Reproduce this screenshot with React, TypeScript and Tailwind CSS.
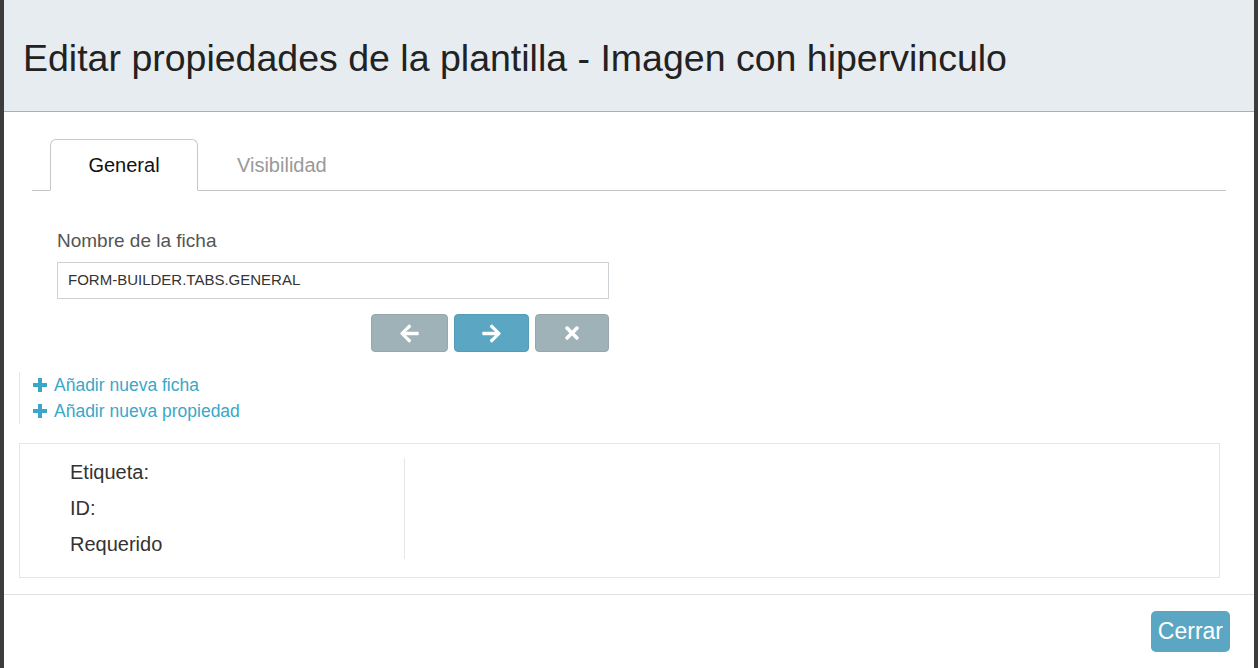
import { FaArrowLeft, FaArrowRight, FaTimes } from "react-icons/fa";

const font = { fontFamily: '"Liberation Sans", Arial, sans-serif' };

function Plus() {
  return (
    <svg width="14" height="14" viewBox="0 0 14 14" className="shrink-0">
      <path d="M5 0h4v5h5v4H9v5H5V9H0V5h5z" fill="currentColor" />
    </svg>
  );
}

export default function App() {
  return (
    <div className="h-[668px] w-[1258px] bg-[#3c3c3c] px-[4px] overflow-hidden" style={font}>
      <div className="h-full bg-white flex flex-col">
        {/* header */}
        <div className="h-[112px] shrink-0 bg-[#e7ecf0] border-b border-[#a9aeb8] flex items-center pl-[19px] pt-[6px]">
          <h1 className="text-[37.5px] text-[#222]">Editar propiedades de la plantilla - Imagen con hipervinculo</h1>
        </div>

        {/* body */}
        <div className="flex-1">
          <div className="mx-[28px] mt-[27px] border-b border-[#c4c4c4] flex pl-[18px] h-[52px]">
            <div className="w-[148px] h-[52px] -mb-px bg-white border border-[#c8c8c8] border-b-white rounded-t-[6px] flex items-center justify-center text-[20px] text-[#111]">
              General
            </div>
            <div className="px-[39px] flex items-center text-[20px] text-[#999]">Visibilidad</div>
          </div>

          <div className="ml-[53px] w-[552px] mt-[38px]">
            <div className="text-[19px] text-[#555] leading-[24px]">Nombre de la ficha</div>
            <div className="mt-[9px] h-[37px] border border-[#ccd1d6] flex items-center px-[10px] text-[15px] text-[#333]">
              FORM-BUILDER.TABS.GENERAL
            </div>
            <div className="mt-[15px] flex justify-end gap-[6px]">
              <button className="w-[77px] h-[38px] rounded-[4px] bg-[#9eb2b8] border border-[#99a6ab] flex items-center justify-center text-white">
                <FaArrowLeft size={21} />
              </button>
              <button className="w-[75px] h-[38px] rounded-[4px] bg-[#5aa6c3] border border-[#559cb6] flex items-center justify-center text-white">
                <FaArrowRight size={21} />
              </button>
              <button className="w-[74px] h-[38px] rounded-[4px] bg-[#9eb2b8] border border-[#99a6ab] flex items-center justify-center text-white">
                <FaTimes size={20} />
              </button>
            </div>
          </div>

          <div className="ml-[15px] mt-[20px] border-l border-[#e3e6ea] pl-[13px] text-[17.5px] text-[#3aa7c9] leading-[26px]">
            <div className="flex items-center gap-[7px]"><Plus />Añadir nueva ficha</div>
            <div className="flex items-center gap-[7px]"><Plus />Añadir nueva propiedad</div>
          </div>

          <div className="ml-[15px] mt-[19px] w-[1201px] h-[135px] border border-[#e4e7ea] flex pt-[14px]">
            <div className="w-[385px] pl-[50px] h-[101px] border-r border-[#e4e7ea] text-[20px] text-[#333] leading-[36px]">
              <div className="-mt-[4px]">Etiqueta:</div>
              <div>ID:</div>
              <div>Requerido</div>
            </div>
          </div>
        </div>

        {/* footer */}
        <div className="h-[74px] shrink-0 border-t border-[#dfdfe6] flex items-start justify-end pr-[24px] pt-[16px]">
          <button className="h-[41px] px-[7px] rounded-[5px] bg-[#5aa6c3] text-white text-[23px]">Cerrar</button>
        </div>
      </div>
    </div>
  );
}
